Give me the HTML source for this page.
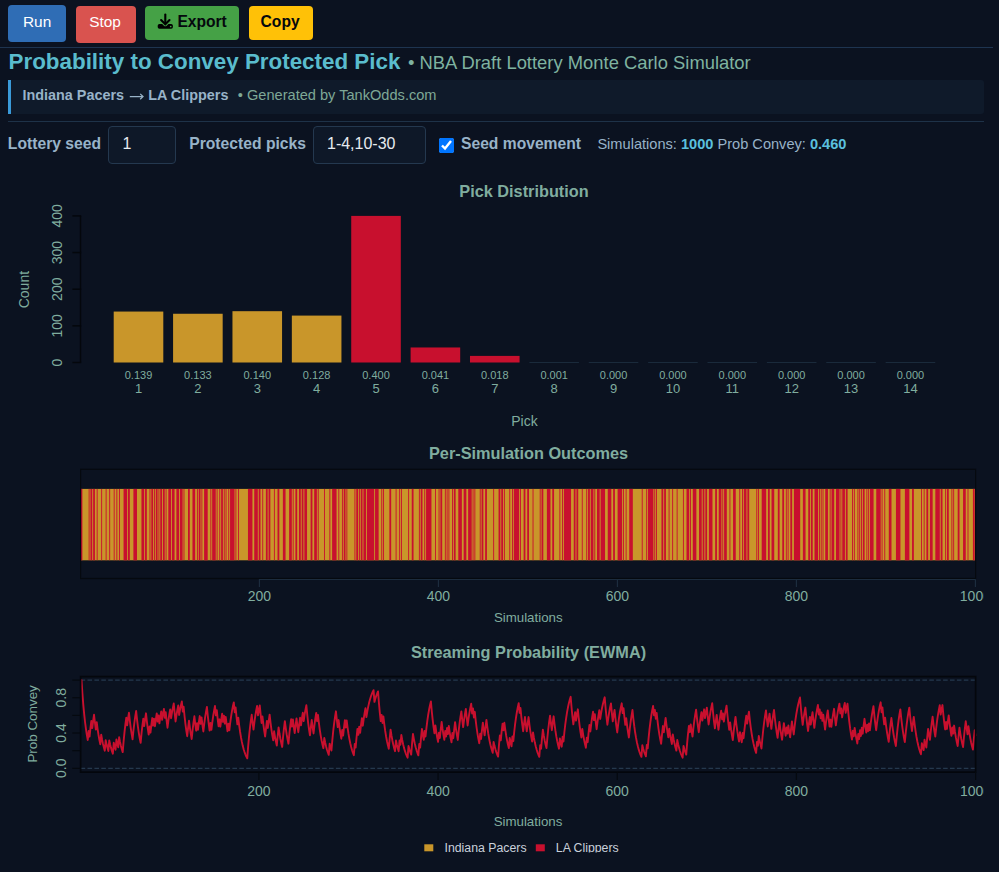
<!DOCTYPE html>
<html><head><meta charset="utf-8">
<style>
html,body{margin:0;padding:0;width:999px;height:872px;overflow:hidden;background:#0b1220;font-family:"Liberation Sans",sans-serif;}
.a{position:absolute;line-height:1;white-space:nowrap;}
.btn{position:absolute;border-radius:4px;border:0;padding:0;margin:0;font-family:"Liberation Sans",sans-serif;}
.btn .a{position:absolute;}
.inp{position:absolute;box-sizing:border-box;border:1px solid #24384f;border-radius:4px;background:#0e1828;margin:0;outline:none;font-family:"Liberation Sans",sans-serif;font-size:16px;color:#e6ebf0;line-height:normal;}
svg{position:absolute;left:0;top:0;}
svg text{font-family:"Liberation Sans",sans-serif;}
</style></head><body>
<div style="position:absolute;left:0;top:47px;width:993px;height:1px;background:#1e3450"></div>
<button class="btn" style="left:8.4px;top:5.2px;width:57.2px;height:37.2px;background:#2f6db5"><span class="a" style="left:14.6px;top:8.56px;font-size:15.4px;color:#fff">Run</span></button>
<button class="btn" style="left:75.5px;top:5.5px;width:60px;height:37px;background:#d9534f"><span class="a" style="left:13.7px;top:8.26px;font-size:15.4px;color:#fff">Stop</span></button>
<button class="btn" style="left:145.4px;top:6.3px;width:94px;height:34.2px;background:#45a146"><span class="a" style="left:32px;top:7.5px;font-size:15.6px;font-weight:bold;color:#05080d">Export</span></button>
<svg width="999" height="60" style="position:absolute;left:0;top:0;z-index:2">
<rect x="157.7" y="24.1" width="15.2" height="4.7" rx="1.7" fill="#000"/>
<path d="M160.6 19.6L165.3 24.3L170 19.6" stroke="#45a146" stroke-width="3.9" fill="none" stroke-linejoin="round"/>
<path d="M165.3 14.5V23.6" stroke="#000" stroke-width="2.1" stroke-linecap="round"/>
<path d="M161.1 20.1L165.3 24.3L169.5 20.1" stroke="#000" stroke-width="2.1" fill="none" stroke-linecap="round"/>
<circle cx="170.7" cy="26.5" r="0.85" fill="#45a146"/>
</svg>
<button class="btn" style="left:249px;top:6.3px;width:64px;height:34.2px;background:#ffc107"><span class="a" style="left:11.6px;top:7.5px;font-size:15.6px;font-weight:bold;color:#05080d">Copy</span></button>

<div class="a" style="left:8.5px;top:50.5px;font-size:22.4px;font-weight:bold;color:#5abccd">Probability to Convey Protected Pick</div>
<div class="a" style="left:408px;top:54px;font-size:18.4px;color:#7fb3a0">• NBA Draft Lottery Monte Carlo Simulator</div>

<div style="position:absolute;left:8px;top:80px;width:976px;height:34px;background:#0f1a2a;border-radius:3px"></div>
<div style="position:absolute;left:8px;top:80px;width:3px;height:34px;background:#3a9ad9"></div>
<div class="a" style="left:22.5px;top:87.8px;font-size:14.4px;font-weight:bold;color:#98b3c8">Indiana Pacers</div>
<svg width="999" height="120" style="position:absolute;left:0;top:0"><path d="M129.8 96.6H142.6M140.2 93.9l2.8 2.7-2.8 2.7" stroke="#98b3c8" stroke-width="1.3" fill="none"/></svg>
<div class="a" style="left:148.2px;top:87.8px;font-size:14.4px;font-weight:bold;color:#98b3c8">LA Clippers</div>
<div class="a" style="left:237.8px;top:87.8px;font-size:14.6px;color:#7ea896">• Generated by TankOdds.com</div>
<div style="position:absolute;left:8px;top:121px;width:976px;height:1px;background:#1e3248"></div>

<div class="a" style="left:7.8px;top:135.7px;font-size:15.7px;font-weight:bold;color:#98b3c8">Lottery seed</div>
<input class="inp" type="text" value="1" style="left:108px;top:126.3px;width:68px;height:37.3px;padding:0 0 1.6px 13.5px">
<div class="a" style="left:189.2px;top:135.7px;font-size:15.7px;font-weight:bold;color:#98b3c8">Protected picks</div>
<input class="inp" type="text" value="1-4,10-30" style="left:313.4px;top:126.3px;width:112.4px;height:37.3px;padding:0 0 1.6px 12.6px">
<input type="checkbox" checked style="position:absolute;left:439px;top:138px;width:15px;height:15px;margin:0">
<div class="a" style="left:461px;top:135.6px;font-size:15.65px;font-weight:bold;color:#98b3c8">Seed movement</div>
<div class="a" style="left:597.4px;top:136.5px;font-size:14.6px;color:#98b3c8">Simulations: <b style="color:#5bc0de">1000</b> Prob Convey: <b style="color:#5bc0de">0.460</b></div>

<svg width="999" height="872" style="position:absolute;left:0;top:0;overflow:hidden">
<defs><clipPath id="cp"><rect x="0" y="0" width="983.6" height="852.5"/></clipPath></defs>
<g clip-path="url(#cp)">
<text x="524" y="197" font-size="16.3" fill="#80ad9f" text-anchor="middle" font-weight="bold">Pick Distribution</text>
<rect x="113.70" y="311.56" width="49.60" height="50.94" fill="#c9962a"/>
<text x="138.5" y="379" font-size="11" fill="#80ad9f" text-anchor="middle">0.139</text>
<text x="138.5" y="393.4" font-size="13" fill="#80ad9f" text-anchor="middle">1</text>
<rect x="173.08" y="313.76" width="49.60" height="48.74" fill="#c9962a"/>
<text x="197.88" y="379" font-size="11" fill="#80ad9f" text-anchor="middle">0.133</text>
<text x="197.88" y="393.4" font-size="13" fill="#80ad9f" text-anchor="middle">2</text>
<rect x="232.46" y="311.19" width="49.60" height="51.31" fill="#c9962a"/>
<text x="257.26" y="379" font-size="11" fill="#80ad9f" text-anchor="middle">0.140</text>
<text x="257.26" y="393.4" font-size="13" fill="#80ad9f" text-anchor="middle">3</text>
<rect x="291.84" y="315.59" width="49.60" height="46.91" fill="#c9962a"/>
<text x="316.64" y="379" font-size="11" fill="#80ad9f" text-anchor="middle">0.128</text>
<text x="316.64" y="393.4" font-size="13" fill="#80ad9f" text-anchor="middle">4</text>
<rect x="351.22" y="215.90" width="49.60" height="146.60" fill="#c8102e"/>
<text x="376.02" y="379" font-size="11" fill="#80ad9f" text-anchor="middle">0.400</text>
<text x="376.02" y="393.4" font-size="13" fill="#80ad9f" text-anchor="middle">5</text>
<rect x="410.60" y="347.47" width="49.60" height="15.03" fill="#c8102e"/>
<text x="435.4" y="379" font-size="11" fill="#80ad9f" text-anchor="middle">0.041</text>
<text x="435.4" y="393.4" font-size="13" fill="#80ad9f" text-anchor="middle">6</text>
<rect x="469.98" y="355.90" width="49.60" height="6.60" fill="#c8102e"/>
<text x="494.78" y="379" font-size="11" fill="#80ad9f" text-anchor="middle">0.018</text>
<text x="494.78" y="393.4" font-size="13" fill="#80ad9f" text-anchor="middle">7</text>
<rect x="529.36" y="362.00" width="49.60" height="1" fill="#1a2a3b"/>
<text x="554.16" y="379" font-size="11" fill="#80ad9f" text-anchor="middle">0.001</text>
<text x="554.16" y="393.4" font-size="13" fill="#80ad9f" text-anchor="middle">8</text>
<rect x="588.74" y="362.00" width="49.60" height="1" fill="#1a2a3b"/>
<text x="613.54" y="379" font-size="11" fill="#80ad9f" text-anchor="middle">0.000</text>
<text x="613.54" y="393.4" font-size="13" fill="#80ad9f" text-anchor="middle">9</text>
<rect x="648.12" y="362.00" width="49.60" height="1" fill="#1a2a3b"/>
<text x="672.92" y="379" font-size="11" fill="#80ad9f" text-anchor="middle">0.000</text>
<text x="672.92" y="393.4" font-size="13" fill="#80ad9f" text-anchor="middle">10</text>
<rect x="707.50" y="362.00" width="49.60" height="1" fill="#1a2a3b"/>
<text x="732.3" y="379" font-size="11" fill="#80ad9f" text-anchor="middle">0.000</text>
<text x="732.3" y="393.4" font-size="13" fill="#80ad9f" text-anchor="middle">11</text>
<rect x="766.88" y="362.00" width="49.60" height="1" fill="#1a2a3b"/>
<text x="791.68" y="379" font-size="11" fill="#80ad9f" text-anchor="middle">0.000</text>
<text x="791.68" y="393.4" font-size="13" fill="#80ad9f" text-anchor="middle">12</text>
<rect x="826.26" y="362.00" width="49.60" height="1" fill="#1a2a3b"/>
<text x="851.06" y="379" font-size="11" fill="#80ad9f" text-anchor="middle">0.000</text>
<text x="851.06" y="393.4" font-size="13" fill="#80ad9f" text-anchor="middle">13</text>
<rect x="885.64" y="362.00" width="49.60" height="1" fill="#1a2a3b"/>
<text x="910.44" y="379" font-size="11" fill="#80ad9f" text-anchor="middle">0.000</text>
<text x="910.44" y="393.4" font-size="13" fill="#80ad9f" text-anchor="middle">14</text>
<path d="M80.5 215.90 V362.5" stroke="#04070c" stroke-width="1.5" fill="none"/>
<path d="M72.4 362.50 H81.2" stroke="#04070c" stroke-width="1.5"/>
<text x="61.8" y="362.5" font-size="14" fill="#80ad9f" text-anchor="middle" transform="rotate(-90 61.8 362.5)">0</text>
<path d="M72.4 325.85 H81.2" stroke="#04070c" stroke-width="1.5"/>
<text x="61.8" y="325.85" font-size="14" fill="#80ad9f" text-anchor="middle" transform="rotate(-90 61.8 325.85)">100</text>
<path d="M72.4 289.20 H81.2" stroke="#04070c" stroke-width="1.5"/>
<text x="61.8" y="289.2" font-size="14" fill="#80ad9f" text-anchor="middle" transform="rotate(-90 61.8 289.2)">200</text>
<path d="M72.4 252.55 H81.2" stroke="#04070c" stroke-width="1.5"/>
<text x="61.8" y="252.55" font-size="14" fill="#80ad9f" text-anchor="middle" transform="rotate(-90 61.8 252.55)">300</text>
<path d="M72.4 215.90 H81.2" stroke="#04070c" stroke-width="1.5"/>
<text x="61.8" y="215.9" font-size="14" fill="#80ad9f" text-anchor="middle" transform="rotate(-90 61.8 215.9)">400</text>
<text x="29.3" y="289.6" font-size="14" fill="#80ad9f" text-anchor="middle" transform="rotate(-90 29.3 289.6)">Count</text>
<text x="524.5" y="425.8" font-size="14" fill="#80ad9f" text-anchor="middle">Pick</text>
<text x="528.5" y="459.25" font-size="16.3" fill="#80ad9f" text-anchor="middle" font-weight="bold">Per-Simulation Outcomes</text>
<rect x="80.6" y="488.9" width="895" height="71.4" fill="#c9962a"/>
<rect x="80.60" y="488.9" width="1.79" height="71.4" fill="#c8102e"/>
<rect x="88.66" y="488.9" width="0.90" height="71.4" fill="#c8102e"/>
<rect x="90.44" y="488.9" width="1.79" height="71.4" fill="#c8102e"/>
<rect x="93.13" y="488.9" width="1.79" height="71.4" fill="#c8102e"/>
<rect x="96.71" y="488.9" width="0.90" height="71.4" fill="#c8102e"/>
<rect x="101.19" y="488.9" width="0.90" height="71.4" fill="#c8102e"/>
<rect x="105.66" y="488.9" width="0.90" height="71.4" fill="#c8102e"/>
<rect x="109.24" y="488.9" width="0.90" height="71.4" fill="#c8102e"/>
<rect x="113.72" y="488.9" width="0.90" height="71.4" fill="#c8102e"/>
<rect x="116.40" y="488.9" width="0.90" height="71.4" fill="#c8102e"/>
<rect x="119.08" y="488.9" width="0.90" height="71.4" fill="#c8102e"/>
<rect x="123.56" y="488.9" width="3.58" height="71.4" fill="#c8102e"/>
<rect x="128.03" y="488.9" width="1.79" height="71.4" fill="#c8102e"/>
<rect x="133.41" y="488.9" width="3.58" height="71.4" fill="#c8102e"/>
<rect x="141.46" y="488.9" width="2.69" height="71.4" fill="#c8102e"/>
<rect x="145.04" y="488.9" width="1.79" height="71.4" fill="#c8102e"/>
<rect x="149.51" y="488.9" width="0.90" height="71.4" fill="#c8102e"/>
<rect x="151.31" y="488.9" width="1.79" height="71.4" fill="#c8102e"/>
<rect x="153.99" y="488.9" width="0.90" height="71.4" fill="#c8102e"/>
<rect x="155.78" y="488.9" width="1.79" height="71.4" fill="#c8102e"/>
<rect x="158.46" y="488.9" width="0.90" height="71.4" fill="#c8102e"/>
<rect x="160.25" y="488.9" width="1.79" height="71.4" fill="#c8102e"/>
<rect x="162.94" y="488.9" width="1.79" height="71.4" fill="#c8102e"/>
<rect x="165.62" y="488.9" width="0.90" height="71.4" fill="#c8102e"/>
<rect x="168.31" y="488.9" width="2.69" height="71.4" fill="#c8102e"/>
<rect x="171.89" y="488.9" width="2.69" height="71.4" fill="#c8102e"/>
<rect x="176.37" y="488.9" width="2.69" height="71.4" fill="#c8102e"/>
<rect x="179.94" y="488.9" width="2.69" height="71.4" fill="#c8102e"/>
<rect x="183.52" y="488.9" width="0.90" height="71.4" fill="#c8102e"/>
<rect x="188.00" y="488.9" width="1.79" height="71.4" fill="#c8102e"/>
<rect x="192.47" y="488.9" width="2.69" height="71.4" fill="#c8102e"/>
<rect x="196.95" y="488.9" width="0.90" height="71.4" fill="#c8102e"/>
<rect x="198.74" y="488.9" width="1.79" height="71.4" fill="#c8102e"/>
<rect x="201.43" y="488.9" width="0.90" height="71.4" fill="#c8102e"/>
<rect x="204.11" y="488.9" width="3.58" height="71.4" fill="#c8102e"/>
<rect x="210.38" y="488.9" width="0.90" height="71.4" fill="#c8102e"/>
<rect x="212.16" y="488.9" width="3.58" height="71.4" fill="#c8102e"/>
<rect x="216.64" y="488.9" width="0.90" height="71.4" fill="#c8102e"/>
<rect x="219.32" y="488.9" width="0.90" height="71.4" fill="#c8102e"/>
<rect x="221.12" y="488.9" width="1.79" height="71.4" fill="#c8102e"/>
<rect x="223.80" y="488.9" width="0.90" height="71.4" fill="#c8102e"/>
<rect x="225.59" y="488.9" width="0.90" height="71.4" fill="#c8102e"/>
<rect x="228.28" y="488.9" width="0.90" height="71.4" fill="#c8102e"/>
<rect x="230.06" y="488.9" width="4.47" height="71.4" fill="#c8102e"/>
<rect x="235.44" y="488.9" width="0.90" height="71.4" fill="#c8102e"/>
<rect x="238.12" y="488.9" width="0.90" height="71.4" fill="#c8102e"/>
<rect x="247.97" y="488.9" width="4.47" height="71.4" fill="#c8102e"/>
<rect x="254.23" y="488.9" width="3.58" height="71.4" fill="#c8102e"/>
<rect x="258.70" y="488.9" width="1.79" height="71.4" fill="#c8102e"/>
<rect x="262.28" y="488.9" width="0.90" height="71.4" fill="#c8102e"/>
<rect x="265.87" y="488.9" width="1.79" height="71.4" fill="#c8102e"/>
<rect x="268.55" y="488.9" width="1.79" height="71.4" fill="#c8102e"/>
<rect x="273.92" y="488.9" width="0.90" height="71.4" fill="#c8102e"/>
<rect x="277.50" y="488.9" width="1.79" height="71.4" fill="#c8102e"/>
<rect x="282.87" y="488.9" width="2.69" height="71.4" fill="#c8102e"/>
<rect x="289.13" y="488.9" width="2.69" height="71.4" fill="#c8102e"/>
<rect x="292.72" y="488.9" width="0.90" height="71.4" fill="#c8102e"/>
<rect x="295.40" y="488.9" width="1.79" height="71.4" fill="#c8102e"/>
<rect x="298.98" y="488.9" width="1.79" height="71.4" fill="#c8102e"/>
<rect x="301.66" y="488.9" width="1.79" height="71.4" fill="#c8102e"/>
<rect x="304.35" y="488.9" width="2.69" height="71.4" fill="#c8102e"/>
<rect x="310.62" y="488.9" width="1.79" height="71.4" fill="#c8102e"/>
<rect x="314.19" y="488.9" width="2.69" height="71.4" fill="#c8102e"/>
<rect x="317.77" y="488.9" width="0.90" height="71.4" fill="#c8102e"/>
<rect x="324.04" y="488.9" width="0.90" height="71.4" fill="#c8102e"/>
<rect x="329.41" y="488.9" width="0.90" height="71.4" fill="#c8102e"/>
<rect x="332.10" y="488.9" width="4.47" height="71.4" fill="#c8102e"/>
<rect x="338.36" y="488.9" width="0.90" height="71.4" fill="#c8102e"/>
<rect x="341.94" y="488.9" width="0.90" height="71.4" fill="#c8102e"/>
<rect x="343.73" y="488.9" width="1.79" height="71.4" fill="#c8102e"/>
<rect x="346.41" y="488.9" width="0.90" height="71.4" fill="#c8102e"/>
<rect x="354.47" y="488.9" width="0.90" height="71.4" fill="#c8102e"/>
<rect x="356.26" y="488.9" width="1.79" height="71.4" fill="#c8102e"/>
<rect x="358.95" y="488.9" width="0.90" height="71.4" fill="#c8102e"/>
<rect x="360.74" y="488.9" width="1.79" height="71.4" fill="#c8102e"/>
<rect x="363.42" y="488.9" width="2.69" height="71.4" fill="#c8102e"/>
<rect x="367.00" y="488.9" width="7.16" height="71.4" fill="#c8102e"/>
<rect x="375.05" y="488.9" width="3.58" height="71.4" fill="#c8102e"/>
<rect x="381.32" y="488.9" width="0.90" height="71.4" fill="#c8102e"/>
<rect x="383.11" y="488.9" width="0.90" height="71.4" fill="#c8102e"/>
<rect x="389.38" y="488.9" width="1.79" height="71.4" fill="#c8102e"/>
<rect x="395.64" y="488.9" width="0.90" height="71.4" fill="#c8102e"/>
<rect x="399.22" y="488.9" width="0.90" height="71.4" fill="#c8102e"/>
<rect x="401.01" y="488.9" width="0.90" height="71.4" fill="#c8102e"/>
<rect x="408.17" y="488.9" width="0.90" height="71.4" fill="#c8102e"/>
<rect x="411.75" y="488.9" width="1.79" height="71.4" fill="#c8102e"/>
<rect x="418.91" y="488.9" width="0.90" height="71.4" fill="#c8102e"/>
<rect x="420.70" y="488.9" width="1.79" height="71.4" fill="#c8102e"/>
<rect x="424.28" y="488.9" width="0.90" height="71.4" fill="#c8102e"/>
<rect x="426.07" y="488.9" width="5.37" height="71.4" fill="#c8102e"/>
<rect x="435.02" y="488.9" width="0.90" height="71.4" fill="#c8102e"/>
<rect x="438.60" y="488.9" width="0.90" height="71.4" fill="#c8102e"/>
<rect x="440.39" y="488.9" width="1.79" height="71.4" fill="#c8102e"/>
<rect x="444.87" y="488.9" width="0.90" height="71.4" fill="#c8102e"/>
<rect x="446.65" y="488.9" width="0.90" height="71.4" fill="#c8102e"/>
<rect x="448.45" y="488.9" width="0.90" height="71.4" fill="#c8102e"/>
<rect x="452.02" y="488.9" width="0.90" height="71.4" fill="#c8102e"/>
<rect x="453.82" y="488.9" width="1.79" height="71.4" fill="#c8102e"/>
<rect x="458.29" y="488.9" width="3.58" height="71.4" fill="#c8102e"/>
<rect x="463.66" y="488.9" width="2.69" height="71.4" fill="#c8102e"/>
<rect x="468.13" y="488.9" width="3.58" height="71.4" fill="#c8102e"/>
<rect x="472.61" y="488.9" width="0.90" height="71.4" fill="#c8102e"/>
<rect x="474.40" y="488.9" width="0.90" height="71.4" fill="#c8102e"/>
<rect x="479.77" y="488.9" width="0.90" height="71.4" fill="#c8102e"/>
<rect x="481.56" y="488.9" width="1.79" height="71.4" fill="#c8102e"/>
<rect x="485.14" y="488.9" width="1.79" height="71.4" fill="#c8102e"/>
<rect x="493.20" y="488.9" width="0.90" height="71.4" fill="#c8102e"/>
<rect x="498.57" y="488.9" width="1.79" height="71.4" fill="#c8102e"/>
<rect x="501.25" y="488.9" width="1.79" height="71.4" fill="#c8102e"/>
<rect x="503.94" y="488.9" width="0.90" height="71.4" fill="#c8102e"/>
<rect x="509.30" y="488.9" width="0.90" height="71.4" fill="#c8102e"/>
<rect x="511.99" y="488.9" width="0.90" height="71.4" fill="#c8102e"/>
<rect x="513.78" y="488.9" width="5.37" height="71.4" fill="#c8102e"/>
<rect x="520.04" y="488.9" width="0.90" height="71.4" fill="#c8102e"/>
<rect x="523.62" y="488.9" width="1.79" height="71.4" fill="#c8102e"/>
<rect x="527.21" y="488.9" width="1.79" height="71.4" fill="#c8102e"/>
<rect x="532.58" y="488.9" width="0.90" height="71.4" fill="#c8102e"/>
<rect x="539.74" y="488.9" width="0.90" height="71.4" fill="#c8102e"/>
<rect x="541.52" y="488.9" width="1.79" height="71.4" fill="#c8102e"/>
<rect x="546.89" y="488.9" width="3.58" height="71.4" fill="#c8102e"/>
<rect x="552.26" y="488.9" width="1.79" height="71.4" fill="#c8102e"/>
<rect x="559.42" y="488.9" width="0.90" height="71.4" fill="#c8102e"/>
<rect x="562.11" y="488.9" width="0.90" height="71.4" fill="#c8102e"/>
<rect x="563.90" y="488.9" width="7.16" height="71.4" fill="#c8102e"/>
<rect x="573.75" y="488.9" width="1.79" height="71.4" fill="#c8102e"/>
<rect x="576.43" y="488.9" width="1.79" height="71.4" fill="#c8102e"/>
<rect x="581.80" y="488.9" width="0.90" height="71.4" fill="#c8102e"/>
<rect x="586.27" y="488.9" width="0.90" height="71.4" fill="#c8102e"/>
<rect x="588.07" y="488.9" width="1.79" height="71.4" fill="#c8102e"/>
<rect x="590.75" y="488.9" width="2.69" height="71.4" fill="#c8102e"/>
<rect x="594.33" y="488.9" width="0.90" height="71.4" fill="#c8102e"/>
<rect x="597.01" y="488.9" width="2.69" height="71.4" fill="#c8102e"/>
<rect x="600.60" y="488.9" width="4.47" height="71.4" fill="#c8102e"/>
<rect x="607.75" y="488.9" width="3.58" height="71.4" fill="#c8102e"/>
<rect x="613.12" y="488.9" width="1.79" height="71.4" fill="#c8102e"/>
<rect x="617.60" y="488.9" width="4.47" height="71.4" fill="#c8102e"/>
<rect x="622.97" y="488.9" width="0.90" height="71.4" fill="#c8102e"/>
<rect x="625.66" y="488.9" width="0.90" height="71.4" fill="#c8102e"/>
<rect x="629.24" y="488.9" width="3.58" height="71.4" fill="#c8102e"/>
<rect x="641.76" y="488.9" width="0.90" height="71.4" fill="#c8102e"/>
<rect x="646.24" y="488.9" width="0.90" height="71.4" fill="#c8102e"/>
<rect x="648.03" y="488.9" width="5.37" height="71.4" fill="#c8102e"/>
<rect x="654.30" y="488.9" width="0.90" height="71.4" fill="#c8102e"/>
<rect x="656.09" y="488.9" width="0.90" height="71.4" fill="#c8102e"/>
<rect x="661.46" y="488.9" width="1.79" height="71.4" fill="#c8102e"/>
<rect x="664.14" y="488.9" width="1.79" height="71.4" fill="#c8102e"/>
<rect x="668.62" y="488.9" width="0.90" height="71.4" fill="#c8102e"/>
<rect x="672.20" y="488.9" width="0.90" height="71.4" fill="#c8102e"/>
<rect x="676.67" y="488.9" width="0.90" height="71.4" fill="#c8102e"/>
<rect x="682.94" y="488.9" width="0.90" height="71.4" fill="#c8102e"/>
<rect x="686.51" y="488.9" width="2.69" height="71.4" fill="#c8102e"/>
<rect x="690.10" y="488.9" width="0.90" height="71.4" fill="#c8102e"/>
<rect x="692.78" y="488.9" width="3.58" height="71.4" fill="#c8102e"/>
<rect x="699.05" y="488.9" width="2.69" height="71.4" fill="#c8102e"/>
<rect x="702.62" y="488.9" width="1.79" height="71.4" fill="#c8102e"/>
<rect x="705.31" y="488.9" width="1.79" height="71.4" fill="#c8102e"/>
<rect x="708.89" y="488.9" width="3.58" height="71.4" fill="#c8102e"/>
<rect x="715.16" y="488.9" width="1.79" height="71.4" fill="#c8102e"/>
<rect x="718.74" y="488.9" width="2.69" height="71.4" fill="#c8102e"/>
<rect x="722.32" y="488.9" width="0.90" height="71.4" fill="#c8102e"/>
<rect x="724.11" y="488.9" width="2.69" height="71.4" fill="#c8102e"/>
<rect x="729.48" y="488.9" width="0.90" height="71.4" fill="#c8102e"/>
<rect x="733.06" y="488.9" width="2.69" height="71.4" fill="#c8102e"/>
<rect x="739.32" y="488.9" width="0.90" height="71.4" fill="#c8102e"/>
<rect x="742.00" y="488.9" width="0.90" height="71.4" fill="#c8102e"/>
<rect x="743.80" y="488.9" width="2.69" height="71.4" fill="#c8102e"/>
<rect x="747.38" y="488.9" width="1.79" height="71.4" fill="#c8102e"/>
<rect x="756.33" y="488.9" width="0.90" height="71.4" fill="#c8102e"/>
<rect x="758.12" y="488.9" width="0.90" height="71.4" fill="#c8102e"/>
<rect x="761.70" y="488.9" width="4.47" height="71.4" fill="#c8102e"/>
<rect x="767.96" y="488.9" width="1.79" height="71.4" fill="#c8102e"/>
<rect x="771.54" y="488.9" width="2.69" height="71.4" fill="#c8102e"/>
<rect x="777.81" y="488.9" width="1.79" height="71.4" fill="#c8102e"/>
<rect x="782.28" y="488.9" width="1.79" height="71.4" fill="#c8102e"/>
<rect x="785.86" y="488.9" width="0.90" height="71.4" fill="#c8102e"/>
<rect x="787.65" y="488.9" width="0.90" height="71.4" fill="#c8102e"/>
<rect x="790.34" y="488.9" width="1.79" height="71.4" fill="#c8102e"/>
<rect x="793.92" y="488.9" width="6.27" height="71.4" fill="#c8102e"/>
<rect x="802.87" y="488.9" width="2.69" height="71.4" fill="#c8102e"/>
<rect x="808.24" y="488.9" width="1.79" height="71.4" fill="#c8102e"/>
<rect x="810.92" y="488.9" width="1.79" height="71.4" fill="#c8102e"/>
<rect x="814.50" y="488.9" width="3.58" height="71.4" fill="#c8102e"/>
<rect x="818.98" y="488.9" width="0.90" height="71.4" fill="#c8102e"/>
<rect x="820.76" y="488.9" width="0.90" height="71.4" fill="#c8102e"/>
<rect x="822.56" y="488.9" width="0.90" height="71.4" fill="#c8102e"/>
<rect x="825.24" y="488.9" width="2.69" height="71.4" fill="#c8102e"/>
<rect x="829.72" y="488.9" width="0.90" height="71.4" fill="#c8102e"/>
<rect x="831.50" y="488.9" width="2.69" height="71.4" fill="#c8102e"/>
<rect x="835.98" y="488.9" width="3.58" height="71.4" fill="#c8102e"/>
<rect x="840.46" y="488.9" width="0.90" height="71.4" fill="#c8102e"/>
<rect x="842.25" y="488.9" width="2.69" height="71.4" fill="#c8102e"/>
<rect x="845.83" y="488.9" width="1.79" height="71.4" fill="#c8102e"/>
<rect x="852.09" y="488.9" width="0.90" height="71.4" fill="#c8102e"/>
<rect x="853.88" y="488.9" width="0.90" height="71.4" fill="#c8102e"/>
<rect x="857.46" y="488.9" width="0.90" height="71.4" fill="#c8102e"/>
<rect x="859.25" y="488.9" width="0.90" height="71.4" fill="#c8102e"/>
<rect x="861.04" y="488.9" width="0.90" height="71.4" fill="#c8102e"/>
<rect x="862.83" y="488.9" width="1.79" height="71.4" fill="#c8102e"/>
<rect x="866.41" y="488.9" width="0.90" height="71.4" fill="#c8102e"/>
<rect x="868.20" y="488.9" width="0.90" height="71.4" fill="#c8102e"/>
<rect x="869.99" y="488.9" width="3.58" height="71.4" fill="#c8102e"/>
<rect x="876.25" y="488.9" width="4.47" height="71.4" fill="#c8102e"/>
<rect x="881.62" y="488.9" width="0.90" height="71.4" fill="#c8102e"/>
<rect x="884.31" y="488.9" width="0.90" height="71.4" fill="#c8102e"/>
<rect x="888.79" y="488.9" width="2.69" height="71.4" fill="#c8102e"/>
<rect x="895.95" y="488.9" width="4.47" height="71.4" fill="#c8102e"/>
<rect x="904.90" y="488.9" width="4.47" height="71.4" fill="#c8102e"/>
<rect x="912.06" y="488.9" width="1.79" height="71.4" fill="#c8102e"/>
<rect x="921.00" y="488.9" width="0.90" height="71.4" fill="#c8102e"/>
<rect x="923.69" y="488.9" width="0.90" height="71.4" fill="#c8102e"/>
<rect x="926.38" y="488.9" width="1.79" height="71.4" fill="#c8102e"/>
<rect x="929.96" y="488.9" width="2.69" height="71.4" fill="#c8102e"/>
<rect x="935.33" y="488.9" width="4.47" height="71.4" fill="#c8102e"/>
<rect x="940.70" y="488.9" width="1.79" height="71.4" fill="#c8102e"/>
<rect x="945.17" y="488.9" width="0.90" height="71.4" fill="#c8102e"/>
<rect x="946.96" y="488.9" width="1.79" height="71.4" fill="#c8102e"/>
<rect x="951.44" y="488.9" width="0.90" height="71.4" fill="#c8102e"/>
<rect x="953.23" y="488.9" width="0.90" height="71.4" fill="#c8102e"/>
<rect x="957.70" y="488.9" width="1.79" height="71.4" fill="#c8102e"/>
<rect x="963.07" y="488.9" width="2.69" height="71.4" fill="#c8102e"/>
<rect x="967.55" y="488.9" width="0.90" height="71.4" fill="#c8102e"/>
<rect x="972.92" y="488.9" width="1.79" height="71.4" fill="#c8102e"/>
<rect x="80.6" y="469.3" width="895" height="109.2" fill="none" stroke="#05090f" stroke-width="1.2"/>
<path d="M258.9 579.5 H975.6" stroke="#1c2c3e" stroke-width="1.2" fill="none"/>
<path d="M259.42 579.5 V587" stroke="#1c2c3e" stroke-width="1.2"/>
<text x="259.42" y="600.75" font-size="14" fill="#80ad9f" text-anchor="middle">200</text>
<path d="M438.42 579.5 V587" stroke="#1c2c3e" stroke-width="1.2"/>
<text x="438.42" y="600.75" font-size="14" fill="#80ad9f" text-anchor="middle">400</text>
<path d="M617.42 579.5 V587" stroke="#1c2c3e" stroke-width="1.2"/>
<text x="617.42" y="600.75" font-size="14" fill="#80ad9f" text-anchor="middle">600</text>
<path d="M796.42 579.5 V587" stroke="#1c2c3e" stroke-width="1.2"/>
<text x="796.42" y="600.75" font-size="14" fill="#80ad9f" text-anchor="middle">800</text>
<path d="M975.42 579.5 V587" stroke="#1c2c3e" stroke-width="1.2"/>
<text x="975.42" y="600.75" font-size="14" fill="#80ad9f" text-anchor="middle">1000</text>
<text x="528.25" y="621.5" font-size="13.3" fill="#80ad9f" text-anchor="middle">Simulations</text>
<text x="528.5" y="658.4" font-size="16.3" fill="#80ad9f" text-anchor="middle" font-weight="bold">Streaming Probability (EWMA)</text>
<path d="M80.6 768.30 H975.6" stroke="#25384d" stroke-width="1.2" stroke-dasharray="4.6 2.3" fill="none"/>
<path d="M80.6 680.10 H975.6" stroke="#25384d" stroke-width="1.2" stroke-dasharray="4.6 2.3" fill="none"/>
<path d="M80.60 680.10 L81.50 680.10 L82.39 693.33 L83.29 704.58 L84.18 714.13 L85.08 722.26 L85.98 729.17 L86.87 735.04 L87.77 740.03 L88.66 731.04 L89.56 736.63 L90.45 728.15 L91.35 720.94 L92.25 728.04 L93.14 720.85 L94.04 714.74 L94.93 722.77 L95.83 729.60 L96.73 722.18 L97.62 729.10 L98.52 734.98 L99.41 739.97 L100.31 744.22 L101.21 734.61 L102.10 739.66 L103.00 743.96 L103.89 747.61 L104.79 750.71 L105.69 740.12 L106.58 744.35 L107.48 747.94 L108.37 750.99 L109.27 740.36 L110.16 744.55 L111.06 748.11 L111.96 751.14 L112.85 753.71 L113.75 742.67 L114.64 746.52 L115.54 749.78 L116.44 739.33 L117.33 743.68 L118.23 747.37 L119.12 737.28 L120.02 741.93 L120.92 745.89 L121.81 749.25 L122.71 752.11 L123.60 741.31 L124.50 732.13 L125.39 724.32 L126.29 717.69 L127.19 725.28 L128.08 718.50 L128.98 712.74 L129.87 721.08 L130.77 728.16 L131.67 734.18 L132.56 739.30 L133.46 730.42 L134.35 722.87 L135.25 716.46 L136.15 711.00 L137.04 719.60 L137.94 726.90 L138.83 733.11 L139.73 738.39 L140.63 742.88 L141.52 733.46 L142.42 725.46 L143.31 718.65 L144.21 726.10 L145.10 719.20 L146.00 713.33 L146.90 721.58 L147.79 728.59 L148.69 734.54 L149.58 726.38 L150.48 732.67 L151.38 724.78 L152.27 718.08 L153.17 725.61 L154.06 718.79 L154.96 726.21 L155.86 719.30 L156.75 713.42 L157.65 721.65 L158.54 715.42 L159.44 723.35 L160.33 716.86 L161.23 711.35 L162.13 719.89 L163.02 713.92 L163.92 708.85 L164.81 717.77 L165.71 712.12 L166.61 720.54 L167.50 727.71 L168.40 720.57 L169.29 714.50 L170.19 709.34 L171.09 718.18 L171.98 712.47 L172.88 707.61 L173.77 703.49 L174.67 713.21 L175.56 721.47 L176.46 715.27 L177.36 709.99 L178.25 705.51 L179.15 714.93 L180.04 709.70 L180.94 705.26 L181.84 701.49 L182.73 711.51 L183.63 706.80 L184.52 716.02 L185.42 723.86 L186.32 730.53 L187.21 736.20 L188.11 727.78 L189.00 720.63 L189.90 727.78 L190.80 733.86 L191.69 739.02 L192.59 730.19 L193.48 722.67 L194.38 716.29 L195.27 724.09 L196.17 730.72 L197.07 723.13 L197.96 729.90 L198.86 722.43 L199.75 716.08 L200.65 723.92 L201.55 717.34 L202.44 724.99 L203.34 731.48 L204.23 723.78 L205.13 717.22 L206.03 711.66 L206.92 706.92 L207.82 716.13 L208.71 723.95 L209.61 730.61 L210.50 723.03 L211.40 729.82 L212.30 722.36 L213.19 716.02 L214.09 710.63 L214.98 706.05 L215.88 715.39 L216.78 710.10 L217.67 718.83 L218.57 726.25 L219.46 719.33 L220.36 726.67 L221.26 719.69 L222.15 713.75 L223.05 721.93 L223.94 715.66 L224.84 723.55 L225.74 717.04 L226.63 724.72 L227.53 731.26 L228.42 723.59 L229.32 730.29 L230.21 722.76 L231.11 716.37 L232.01 710.93 L232.90 706.30 L233.80 702.37 L234.69 712.26 L235.59 707.44 L236.49 716.57 L237.38 724.33 L238.28 717.69 L239.17 725.28 L240.07 731.74 L240.97 737.22 L241.86 741.88 L242.76 745.85 L243.65 749.21 L244.55 752.08 L245.44 754.51 L246.34 756.58 L247.24 758.34 L248.13 746.60 L249.03 736.63 L249.92 728.15 L250.82 720.94 L251.72 714.81 L252.61 722.84 L253.51 729.66 L254.40 722.22 L255.30 715.90 L256.20 710.53 L257.09 705.97 L257.99 715.32 L258.88 710.04 L259.78 705.55 L260.68 714.96 L261.57 722.96 L262.47 716.53 L263.36 724.30 L264.26 730.90 L265.15 736.51 L266.05 728.05 L266.95 720.85 L267.84 727.97 L268.74 720.79 L269.63 714.69 L270.53 722.73 L271.43 729.56 L272.32 735.37 L273.22 740.31 L274.11 731.28 L275.01 736.83 L275.91 741.55 L276.80 745.57 L277.70 735.75 L278.59 727.40 L279.49 733.53 L280.38 738.75 L281.28 743.18 L282.18 746.95 L283.07 736.92 L283.97 728.40 L284.86 721.15 L285.76 728.23 L286.66 734.24 L287.55 739.35 L288.45 743.69 L289.34 734.15 L290.24 726.04 L291.14 719.15 L292.03 726.52 L292.93 719.56 L293.82 726.87 L294.72 733.09 L295.62 725.14 L296.51 718.38 L297.41 725.87 L298.30 732.23 L299.20 724.41 L300.09 717.77 L300.99 725.35 L301.89 718.56 L302.78 712.79 L303.68 721.12 L304.57 714.96 L305.47 709.74 L306.37 705.29 L307.26 714.74 L308.16 722.78 L309.05 729.60 L309.95 735.41 L310.85 727.11 L311.74 720.06 L312.64 727.30 L313.53 733.45 L314.43 725.44 L315.32 718.64 L316.22 712.86 L317.12 721.18 L318.01 715.02 L318.91 723.01 L319.80 729.80 L320.70 735.58 L321.60 740.49 L322.49 744.66 L323.39 748.20 L324.28 737.99 L325.18 742.54 L326.08 746.40 L326.97 749.68 L327.87 752.48 L328.76 754.85 L329.66 743.64 L330.55 747.34 L331.45 750.48 L332.35 739.92 L333.24 730.95 L334.14 723.32 L335.03 716.84 L335.93 711.33 L336.83 719.87 L337.72 727.14 L338.62 720.08 L339.51 727.32 L340.41 733.46 L341.31 738.69 L342.20 729.90 L343.10 735.66 L343.99 727.33 L344.89 720.24 L345.79 727.45 L346.68 720.35 L347.58 727.54 L348.47 733.65 L349.37 738.85 L350.26 743.27 L351.16 747.02 L352.06 750.22 L352.95 752.93 L353.85 755.23 L354.74 743.96 L355.64 747.61 L356.54 737.49 L357.43 728.88 L358.33 734.79 L359.22 726.59 L360.12 732.85 L361.02 724.93 L361.91 718.21 L362.81 725.72 L363.70 718.88 L364.60 713.06 L365.49 708.12 L366.39 717.14 L367.29 711.59 L368.18 706.87 L369.08 702.85 L369.97 699.44 L370.87 696.54 L371.77 694.07 L372.66 691.98 L373.56 690.19 L374.45 701.91 L375.35 698.64 L376.25 695.86 L377.14 693.49 L378.04 691.49 L378.93 703.01 L379.83 712.80 L380.73 721.13 L381.62 714.97 L382.52 722.97 L383.41 716.54 L384.31 724.30 L385.20 730.90 L386.10 736.51 L387.00 741.28 L387.89 745.33 L388.79 748.78 L389.68 738.48 L390.58 729.72 L391.48 735.51 L392.37 740.43 L393.27 744.61 L394.16 748.16 L395.06 751.18 L395.96 740.52 L396.85 744.69 L397.75 748.23 L398.64 751.24 L399.54 740.57 L400.43 744.73 L401.33 735.03 L402.23 740.02 L403.12 744.27 L404.02 747.87 L404.91 750.93 L405.81 753.54 L406.71 755.75 L407.60 757.64 L408.50 746.01 L409.39 749.35 L410.29 752.19 L411.19 754.61 L412.08 743.43 L412.98 733.93 L413.87 739.09 L414.77 743.47 L415.67 747.19 L416.56 750.36 L417.46 753.05 L418.35 755.34 L419.25 744.05 L420.14 747.69 L421.04 737.55 L421.94 728.93 L422.83 734.84 L423.73 739.86 L424.62 730.89 L425.52 736.50 L426.42 728.04 L427.31 720.85 L428.21 714.74 L429.10 709.54 L430.00 705.13 L430.90 701.37 L431.79 711.41 L432.69 719.95 L433.58 727.20 L434.48 733.36 L435.37 725.37 L436.27 731.81 L437.17 737.29 L438.06 741.94 L438.96 732.66 L439.85 738.01 L440.75 729.32 L441.65 721.94 L442.54 728.89 L443.44 734.80 L444.33 739.83 L445.23 730.87 L446.13 736.48 L447.02 728.03 L447.92 734.07 L448.81 725.97 L449.71 732.32 L450.61 737.72 L451.50 742.31 L452.40 732.97 L453.29 738.27 L454.19 729.55 L455.08 722.13 L455.98 729.06 L456.88 734.94 L457.77 739.95 L458.67 730.97 L459.56 723.34 L460.46 716.85 L461.36 711.34 L462.25 719.88 L463.15 727.15 L464.04 720.09 L464.94 714.09 L465.84 708.99 L466.73 717.89 L467.63 725.45 L468.52 718.65 L469.42 712.87 L470.31 707.95 L471.21 703.77 L472.11 713.45 L473.00 708.45 L473.90 717.43 L474.79 711.83 L475.69 720.30 L476.59 727.50 L477.48 733.62 L478.38 738.82 L479.27 743.24 L480.17 733.77 L481.07 738.95 L481.96 730.12 L482.86 722.62 L483.75 729.47 L484.65 735.30 L485.54 727.02 L486.44 719.98 L487.34 727.23 L488.23 733.39 L489.13 738.62 L490.02 743.08 L490.92 746.86 L491.82 750.08 L492.71 752.81 L493.61 741.90 L494.50 745.86 L495.40 749.23 L496.30 752.09 L497.19 754.52 L498.09 756.59 L498.98 745.11 L499.88 735.36 L500.78 740.30 L501.67 731.27 L502.57 723.60 L503.46 730.30 L504.36 722.77 L505.25 729.60 L506.15 735.41 L507.05 740.34 L507.94 744.53 L508.84 748.10 L509.73 737.90 L510.63 742.46 L511.53 746.34 L512.42 736.40 L513.32 741.19 L514.21 732.02 L515.11 724.23 L516.01 717.61 L516.90 711.99 L517.80 707.20 L518.69 703.14 L519.59 712.91 L520.48 707.99 L521.38 717.04 L522.28 724.73 L523.17 731.26 L524.07 723.59 L524.96 717.06 L525.86 724.75 L526.76 731.28 L527.65 723.61 L528.55 717.08 L529.44 724.76 L530.34 731.29 L531.24 736.84 L532.13 741.56 L533.03 732.34 L533.92 737.74 L534.82 742.32 L535.72 746.22 L536.61 749.53 L537.51 752.35 L538.40 754.74 L539.30 756.77 L540.19 745.27 L541.09 748.73 L541.99 738.43 L542.88 729.68 L543.78 735.48 L544.67 740.40 L545.57 744.58 L546.47 748.14 L547.36 737.94 L548.26 729.26 L549.15 721.89 L550.05 715.62 L550.95 723.52 L551.84 730.24 L552.74 722.72 L553.63 716.32 L554.53 724.12 L555.42 730.75 L556.32 736.38 L557.22 741.17 L558.11 745.24 L559.01 748.70 L559.90 738.41 L560.80 742.89 L561.70 746.70 L562.59 736.71 L563.49 741.45 L564.38 732.25 L565.28 724.43 L566.18 717.78 L567.07 712.13 L567.97 707.32 L568.86 703.24 L569.76 699.77 L570.66 696.82 L571.55 707.54 L572.45 716.65 L573.34 724.40 L574.24 717.76 L575.13 712.11 L576.03 720.54 L576.93 714.47 L577.82 709.32 L578.72 718.16 L579.61 725.68 L580.51 732.08 L581.41 737.51 L582.30 728.90 L583.20 734.81 L584.09 739.83 L584.99 744.10 L585.89 747.73 L586.78 737.59 L587.68 742.19 L588.57 732.88 L589.47 724.96 L590.36 731.46 L591.26 723.76 L592.16 717.21 L593.05 711.64 L593.95 720.14 L594.84 714.14 L595.74 722.26 L596.64 729.17 L597.53 721.81 L598.43 715.55 L599.32 710.23 L600.22 718.94 L601.12 713.12 L602.01 708.16 L602.91 703.95 L603.80 700.38 L604.70 697.33 L605.59 707.98 L606.49 717.03 L607.39 724.72 L608.28 718.03 L609.18 712.34 L610.07 707.50 L610.97 703.39 L611.87 713.13 L612.76 721.40 L613.66 715.21 L614.55 709.94 L615.45 718.70 L616.35 726.14 L617.24 732.46 L618.14 724.61 L619.03 717.93 L619.93 712.26 L620.83 707.43 L621.72 703.33 L622.62 713.08 L623.51 708.13 L624.41 717.16 L625.30 724.83 L626.20 718.12 L627.10 725.65 L627.99 732.04 L628.89 737.48 L629.78 728.88 L630.68 721.56 L631.58 715.34 L632.47 710.05 L633.37 718.79 L634.26 726.22 L635.16 732.53 L636.06 737.90 L636.95 742.46 L637.85 746.33 L638.74 749.63 L639.64 752.43 L640.53 754.81 L641.43 756.83 L642.33 745.32 L643.22 748.77 L644.12 751.70 L645.01 754.19 L645.91 756.31 L646.81 744.87 L647.70 748.39 L648.60 738.15 L649.49 729.44 L650.39 722.04 L651.29 715.75 L652.18 710.40 L653.08 705.86 L653.97 715.22 L654.87 709.95 L655.77 718.71 L656.66 712.91 L657.56 721.22 L658.45 728.28 L659.35 734.29 L660.24 739.39 L661.14 743.73 L662.04 734.18 L662.93 726.07 L663.83 732.40 L664.72 724.56 L665.62 717.89 L666.52 725.45 L667.41 731.88 L668.31 737.34 L669.20 728.76 L670.10 734.69 L671.00 739.73 L671.89 744.01 L672.79 734.43 L673.68 739.51 L674.58 743.83 L675.47 747.50 L676.37 750.62 L677.27 740.04 L678.16 744.28 L679.06 747.88 L679.95 750.95 L680.85 753.55 L681.75 755.76 L682.64 757.64 L683.54 746.01 L684.43 749.35 L685.33 752.20 L686.23 754.61 L687.12 743.43 L688.02 733.93 L688.91 725.86 L689.81 732.23 L690.71 724.41 L691.60 730.99 L692.50 736.59 L693.39 728.11 L694.29 720.91 L695.18 714.79 L696.08 709.59 L696.98 718.39 L697.87 725.88 L698.77 732.24 L699.66 724.42 L700.56 717.77 L701.46 712.12 L702.35 720.55 L703.25 714.48 L704.14 709.32 L705.04 718.17 L705.94 712.46 L706.83 707.61 L707.73 716.71 L708.62 724.45 L709.52 717.80 L710.41 712.14 L711.31 707.34 L712.21 703.25 L713.10 713.01 L714.00 721.30 L714.89 728.35 L715.79 721.11 L716.69 714.96 L717.58 722.96 L718.48 729.76 L719.37 722.31 L720.27 715.98 L721.17 710.60 L722.06 719.25 L722.96 713.38 L723.85 721.62 L724.75 715.39 L725.65 710.10 L726.54 705.60 L727.44 715.00 L728.33 723.00 L729.23 729.79 L730.12 722.34 L731.02 729.23 L731.92 735.09 L732.81 740.07 L733.71 731.08 L734.60 723.43 L735.50 716.93 L736.40 724.64 L737.29 731.19 L738.19 736.75 L739.08 741.49 L739.98 732.28 L740.88 737.68 L741.77 742.27 L742.67 732.95 L743.56 738.25 L744.46 729.53 L745.35 722.11 L746.25 715.81 L747.15 723.68 L748.04 717.15 L748.94 711.59 L749.83 720.10 L750.73 727.33 L751.63 733.47 L752.52 738.70 L753.42 743.14 L754.31 746.91 L755.21 750.12 L756.11 752.85 L757.00 741.94 L757.90 745.89 L758.79 736.02 L759.69 740.86 L760.58 744.98 L761.48 748.48 L762.38 738.22 L763.27 729.50 L764.17 722.09 L765.06 715.79 L765.96 710.44 L766.86 719.12 L767.75 726.50 L768.65 719.54 L769.54 713.62 L770.44 721.82 L771.34 728.79 L772.23 721.49 L773.13 715.28 L774.02 710.00 L774.92 718.75 L775.82 726.18 L776.71 732.50 L777.61 737.87 L778.50 729.20 L779.40 721.84 L780.29 728.81 L781.19 734.73 L782.09 739.77 L782.98 730.82 L783.88 723.21 L784.77 729.97 L785.67 735.72 L786.57 727.38 L787.46 733.52 L788.36 725.50 L789.25 731.92 L790.15 737.38 L791.05 728.79 L791.94 721.48 L792.84 728.51 L793.73 734.48 L794.63 726.32 L795.52 719.39 L796.42 713.49 L797.32 708.48 L798.21 704.23 L799.11 700.61 L800.00 697.53 L800.90 708.15 L801.80 717.17 L802.69 724.84 L803.59 718.13 L804.48 712.42 L805.38 707.58 L806.28 716.68 L807.17 724.43 L808.07 731.01 L808.96 723.37 L809.86 716.88 L810.76 724.59 L811.65 717.92 L812.55 712.25 L813.44 720.65 L814.34 727.80 L815.23 720.65 L816.13 714.56 L817.03 709.39 L817.92 705.00 L818.82 714.50 L819.71 709.34 L820.61 718.18 L821.51 712.47 L822.40 720.84 L823.30 714.73 L824.19 722.77 L825.09 729.60 L825.99 722.17 L826.88 715.86 L827.78 710.50 L828.67 719.17 L829.57 726.54 L830.46 719.57 L831.36 726.88 L832.26 719.86 L833.15 713.90 L834.05 708.83 L834.94 717.75 L835.84 725.33 L836.74 718.55 L837.63 712.78 L838.53 707.88 L839.42 703.71 L840.32 713.40 L841.22 708.40 L842.11 717.39 L843.01 711.80 L843.90 707.04 L844.80 703.00 L845.70 712.80 L846.59 707.89 L847.49 703.72 L848.38 713.41 L849.28 721.64 L850.17 728.64 L851.07 734.59 L851.97 739.65 L852.86 730.71 L853.76 736.35 L854.65 727.91 L855.55 733.97 L856.45 739.12 L857.34 743.50 L858.24 733.99 L859.13 739.14 L860.03 730.28 L860.93 735.98 L861.82 727.60 L862.72 733.71 L863.61 725.66 L864.51 718.83 L865.40 726.25 L866.30 732.56 L867.20 724.69 L868.09 731.23 L868.99 723.56 L869.88 730.27 L870.78 722.75 L871.68 716.35 L872.57 710.91 L873.47 706.29 L874.36 715.59 L875.26 723.50 L876.16 730.22 L877.05 722.70 L877.95 716.31 L878.84 710.88 L879.74 706.26 L880.64 702.34 L881.53 712.23 L882.43 707.41 L883.32 716.55 L884.22 724.31 L885.11 717.68 L886.01 725.27 L886.91 731.73 L887.80 737.21 L888.70 741.87 L889.59 732.61 L890.49 724.73 L891.39 718.04 L892.28 725.58 L893.18 731.99 L894.07 737.43 L894.97 742.06 L895.87 746.00 L896.76 736.11 L897.66 727.71 L898.55 720.57 L899.45 714.50 L900.34 709.34 L901.24 718.18 L902.14 725.70 L903.03 732.09 L903.93 737.52 L904.82 742.14 L905.72 732.83 L906.62 724.92 L907.51 718.20 L908.41 712.48 L909.30 707.63 L910.20 716.73 L911.10 724.46 L911.99 731.04 L912.89 723.40 L913.78 716.90 L914.68 724.61 L915.57 731.17 L916.47 736.74 L917.37 741.47 L918.26 745.50 L919.16 748.92 L920.05 751.82 L920.95 754.29 L921.85 743.17 L922.74 746.94 L923.64 750.14 L924.53 739.63 L925.43 743.93 L926.33 747.59 L927.22 737.47 L928.12 728.86 L929.01 734.78 L929.91 739.81 L930.81 730.85 L931.70 723.24 L932.60 716.77 L933.49 724.50 L934.39 731.07 L935.28 736.65 L936.18 728.17 L937.08 720.96 L937.97 714.83 L938.87 709.62 L939.76 705.19 L940.66 714.66 L941.56 709.47 L942.45 705.07 L943.35 714.55 L944.24 722.62 L945.14 729.47 L946.04 722.06 L946.93 729.00 L947.83 721.66 L948.72 715.43 L949.62 723.36 L950.51 730.10 L951.41 735.83 L952.31 727.47 L953.20 733.60 L954.10 725.57 L954.99 731.98 L955.89 737.43 L956.79 742.06 L957.68 746.00 L958.58 736.11 L959.47 727.71 L960.37 733.80 L961.27 738.97 L962.16 743.37 L963.06 747.11 L963.95 737.06 L964.85 728.52 L965.75 721.25 L966.64 728.31 L967.54 734.31 L968.43 726.18 L969.33 732.50 L970.22 737.87 L971.12 742.43 L972.02 746.31 L972.91 749.61 L973.81 739.18 L974.70 730.32 L975.60 736.02" stroke="#c8102e" stroke-width="1.9" fill="none" stroke-linejoin="round"/>
<rect x="80.6" y="676.6" width="895" height="95.5" fill="none" stroke="#04070c" stroke-width="1.7"/>
<path d="M72.3 768.30 H80.6" stroke="#05090f" stroke-width="1.2"/>
<path d="M72.3 750.66 H80.6" stroke="#05090f" stroke-width="1.2"/>
<path d="M72.3 733.02 H80.6" stroke="#05090f" stroke-width="1.2"/>
<path d="M72.3 715.38 H80.6" stroke="#05090f" stroke-width="1.2"/>
<path d="M72.3 697.74 H80.6" stroke="#05090f" stroke-width="1.2"/>
<path d="M72.3 680.10 H80.6" stroke="#05090f" stroke-width="1.2"/>
<text x="66.5" y="768.3" font-size="14" fill="#80ad9f" text-anchor="middle" transform="rotate(-90 66.5 768.3)">0.0</text>
<text x="66.5" y="733.02" font-size="14" fill="#80ad9f" text-anchor="middle" transform="rotate(-90 66.5 733.02)">0.4</text>
<text x="66.5" y="697.74" font-size="14" fill="#80ad9f" text-anchor="middle" transform="rotate(-90 66.5 697.74)">0.8</text>
<text x="36.8" y="723.9" font-size="13.4" fill="#80ad9f" text-anchor="middle" transform="rotate(-90 36.8 723.9)">Prob Convey</text>
<path d="M258.88 772 V780" stroke="#05090f" stroke-width="1.2"/>
<text x="258.88" y="796.25" font-size="14" fill="#80ad9f" text-anchor="middle">200</text>
<path d="M438.06 772 V780" stroke="#05090f" stroke-width="1.2"/>
<text x="438.06" y="796.25" font-size="14" fill="#80ad9f" text-anchor="middle">400</text>
<path d="M617.24 772 V780" stroke="#05090f" stroke-width="1.2"/>
<text x="617.24" y="796.25" font-size="14" fill="#80ad9f" text-anchor="middle">600</text>
<path d="M796.42 772 V780" stroke="#05090f" stroke-width="1.2"/>
<text x="796.42" y="796.25" font-size="14" fill="#80ad9f" text-anchor="middle">800</text>
<path d="M975.60 772 V780" stroke="#05090f" stroke-width="1.2"/>
<text x="975.6" y="796.25" font-size="14" fill="#80ad9f" text-anchor="middle">1000</text>
<text x="528" y="825.75" font-size="13.3" fill="#80ad9f" text-anchor="middle">Simulations</text>
<rect x="424.3" y="844.3" width="9" height="7" fill="#c9962a"/>
<text x="444.5" y="851.8" font-size="12.3" fill="#c9d1db" text-anchor="start">Indiana Pacers</text>
<rect x="535.8" y="844.3" width="9" height="7" fill="#c8102e"/>
<text x="555.8" y="851.8" font-size="12.3" fill="#c9d1db" text-anchor="start">LA Clippers</text>
</g>
</svg>
</body></html>
